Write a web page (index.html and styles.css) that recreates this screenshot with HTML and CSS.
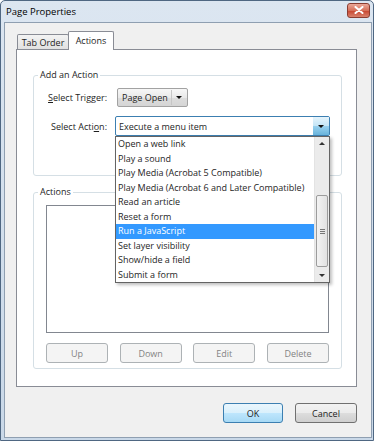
FILE: index.html
```html
<html>
<head>
  <title>Page Properties</title>
  <link rel="stylesheet" href="styles.css">
</head>
<body>
  <div class="window">
    <div class="titlebar">
      <span class="title">Page Properties</span>
      <span class="close">
        <svg width="10" height="8" viewBox="0 0 10 8">
          <path d="M1.5 1 L8.5 7 M8.5 1 L1.5 7" stroke="#fff" stroke-width="2" stroke-linecap="round"/>
        </svg>
      </span>
    </div>

    <div class="client">
      <div class="tabs">
        <div class="tab">Tab Order</div>
        <div class="tab active">Actions</div>
      </div>

      <div class="panel">
        <fieldset class="group add_group">
          <legend>Add an Action</legend>
          <div class="row">
            <label class="row_label"><u>S</u>elect Trigger:</label>
            <div class="combo combo_button">
              <span>Page Open</span>
              <span class="combo_arrow"><span class="tri"></span></span>
            </div>
          </div>
          <div class="row row_action">
            <label class="row_label">Select Acti<u>o</u>n:</label>
            <div class="combo_wrap">
              <div class="combo combo_edit">
                <span>Execute a menu item</span>
                <span class="combo_btn"><span class="tri"></span></span>
              </div>
              <div class="dropdown">
                <ul class="items">
                  <li>Open a web link</li>
                  <li>Play a sound</li>
                  <li>Play Media (Acrobat 5 Compatible)</li>
                  <li>Play Media (Acrobat 6 and Later Compatible)</li>
                  <li>Read an article</li>
                  <li>Reset a form</li>
                  <li class="selected">Run a JavaScript</li>
                  <li>Set layer visibility</li>
                  <li>Show/hide a field</li>
                  <li>Submit a form</li>
                </ul>
                <div class="scrollbar">
                  <div class="sb_arrow"><span class="tri_up"></span></div>
                  <div class="sb_track">
                    <div class="sb_thumb"><span class="grip"></span></div>
                  </div>
                  <div class="sb_arrow"><span class="tri_down"></span></div>
                </div>
              </div>
            </div>
          </div>
        </fieldset>

        <fieldset class="group actions_group">
          <legend>Actions</legend>
          <div class="listbox"></div>
          <div class="list_buttons">
            <button class="btn" disabled>Up</button>
            <button class="btn" disabled>Down</button>
            <button class="btn" disabled>Edit</button>
            <button class="btn" disabled>Delete</button>
          </div>
        </fieldset>
      </div>

      <div class="footer">
        <button class="btn btn_default">OK</button>
        <button class="btn">Cancel</button>
      </div>
    </div>
  </div>
</body>
</html>
```

FILE: styles.css
```css
body {
    margin: 0px;
    padding: 0px;
    background-color: #fff;
    font-family: "Open Sans", "Noto Sans", sans-serif;
    font-size: 9px;
    color: #1e1e1e;
}

.window {
    width: 372px;
    height: 439px;
    border: 1px solid #4f6782;
    border-radius: 5px 5px 0 0;
    background: linear-gradient(#dce6f1, #c9d8e8);
    display: flex;
    flex-direction: column;
}

.titlebar {
    height: 21px;
    display: flex;
    align-items: center;
    justify-content: space-between;
    padding: 0 3px 0 5px;
}

.title {
    color: #000;
    font-size: 9.5px;
}

.close {
    width: 21px;
    height: 13px;
    margin-top: -3px;
    border: 1px solid #8a3d31;
    border-radius: 3px;
    background: linear-gradient(#eba898, #d6705a 50%, #c7432d 51%, #d9826d);
    display: flex;
    align-items: center;
    justify-content: center;
}

.client {
    flex: 1;
    margin: 0 1px 2px 3px;
    border: 1px solid #8f9fb1;
    background-color: #f0f0f0;
    padding: 8px 14px 0 11px;
}

/* tabs */
.tabs {
    height: 18px;
    display: flex;
    align-items: flex-end;
    padding-left: 1px;
}

.tab {
    box-sizing: border-box;
    height: 15px;
    width: 52px;
    border: 1px solid #898c95;
    border-bottom: none;
    background: linear-gradient(#f3f3f3, #e1e1e1);
    display: flex;
    align-items: center;
    justify-content: center;
    border-radius: 2px 2px 0 0;
}

.tab.active {
    position: relative;
    z-index: 1;
    height: 19px;
    width: 46px;
    margin-bottom: -1px;
    margin-left: -1px;
    background: #fff;
    padding-bottom: 2px;
}

.panel {
    box-sizing: border-box;
    height: 338px;
    border: 1px solid #898c95;
    background-color: #fff;
    padding: 18px 0 0 16px;
}

/* group boxes */
.group {
    box-sizing: border-box;
    width: 309px;
    margin: 0;
    padding: 6px 0 0 4px;
    border: 1px solid #d5dfe5;
    border-radius: 3px;
    min-width: 0;
}

.group legend {
    padding: 0 2px;
    line-height: 14px;
}

.add_group {
    height: 108px;
}

.actions_group {
    height: 184px;
    margin-top: 9px;
}

.row {
    display: flex;
    align-items: center;
    gap: 10px;
    height: 19px;
}

.row_action {
    margin-top: 9px;
    height: 20px;
    gap: 8px;
}

.row_label {
    width: 69px;
    text-align: right;
}

.combo {
    box-sizing: border-box;
    display: flex;
    align-items: center;
    justify-content: space-between;
}

.combo_button {
    width: 71px;
    height: 19px;
    border: 1px solid #a2a2a2;
    border-radius: 2px;
    background: linear-gradient(#f7f7f7, #e9e9e9 50%, #dcdcdc 51%, #d5d5d5);
    padding-left: 4px;
}

.combo_arrow {
    width: 14px;
    height: 15px;
    margin-right: 1px;
    border-left: 1px solid #c6c6c6;
    display: flex;
    align-items: center;
    justify-content: center;
}

.tri {
    width: 0;
    height: 0;
    border-left: 3px solid transparent;
    border-right: 3px solid transparent;
    border-top: 3px solid #111;
}

.combo_wrap {
    position: relative;
}

.combo_edit {
    width: 215px;
    height: 20px;
    border: 1px solid #3c7fb1;
    border-radius: 2px;
    background: #fff;
    padding-left: 3px;
}

.combo_btn {
    width: 16px;
    height: 18px;
    background: linear-gradient(#e5f4fc, #c4e5f6 50%, #98d1ef 51%, #68b3db);
    display: flex;
    align-items: center;
    justify-content: center;
}

/* dropped-down list, lies over the groups */
.dropdown {
    position: absolute;
    z-index: 5;
    top: 20px;
    left: 0;
    box-sizing: border-box;
    width: 215px;
    height: 147px;
    border: 1px solid #646464;
    background: #fff;
    box-shadow: 2px 2px 3px rgba(0, 0, 0, 0.25);
    display: flex;
}

.items {
    list-style: none;
    margin: 0;
    padding: 0;
    flex: 1;
}

.items li {
    height: 14.5px;
    line-height: 14.5px;
    padding-left: 2px;
    white-space: nowrap;
}

.items li.selected {
    background-color: #3399ff;
    color: #fff;
}

.scrollbar {
    width: 14px;
    background: #ebebeb;
    border-left: 1px solid #e3e3e3;
    display: flex;
    flex-direction: column;
}

.sb_arrow {
    height: 13px;
    display: flex;
    align-items: center;
    justify-content: center;
}

.tri_up, .tri_down {
    width: 0;
    height: 0;
    border-left: 3px solid transparent;
    border-right: 3px solid transparent;
}

.tri_up {
    border-bottom: 3px solid #333;
}

.tri_down {
    border-top: 3px solid #333;
}

.sb_track {
    flex: 1;
    padding-top: 45px;
}

.sb_thumb {
    box-sizing: border-box;
    height: 72px;
    margin: 0 1px;
    border: 1px solid #9c9c9c;
    border-radius: 2px;
    background: linear-gradient(90deg, #f3f3f3, #e2e2e2);
    display: flex;
    align-items: center;
    justify-content: center;
}

.grip {
    width: 5px;
    height: 5px;
    border-top: 1px solid #777;
    border-bottom: 1px solid #777;
    box-sizing: border-box;
    position: relative;
}

.grip::after {
    content: "";
    display: block;
    margin-top: 1px;
    height: 1px;
    background: #777;
}

/* actions list */
.listbox {
    box-sizing: border-box;
    width: 283px;
    height: 128px;
    margin: 0 0 0 8px;
    border: 1px solid #828790;
    background: #fff;
}

.list_buttons {
    width: 283px;
    margin: 10px 0 0 8px;
    display: flex;
    justify-content: space-between;
}

.btn {
    box-sizing: border-box;
    width: 62px;
    height: 20px;
    border: 1px solid #707070;
    border-radius: 3px;
    background: linear-gradient(#f2f2f2, #ebebeb 50%, #dddddd 51%, #cfcfcf);
    font-family: inherit;
    font-size: 9px;
    color: #1e1e1e;
    padding: 0;
}

.btn:disabled {
    border-color: #adb2b5;
    background: #f4f4f4;
    color: #838383;
}

.btn_default {
    width: 60px;
    border-color: #3c7fb1;
    background: linear-gradient(#eaf6fd, #d9f0fc 50%, #bee6fd 51%, #a7d9f5);
}

.footer {
    width: 341px;
    margin-top: 16px;
    display: flex;
    justify-content: flex-end;
    gap: 12px;
}
```
